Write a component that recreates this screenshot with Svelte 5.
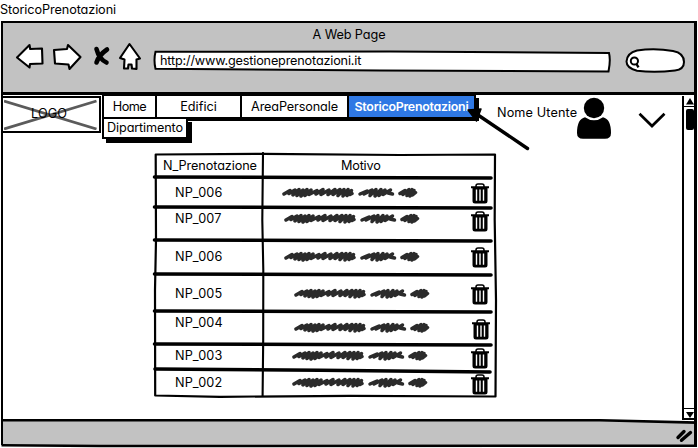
<script>
  const tabs = [
    { label: 'Home', width: 53, spacing: -0.5 },
    { label: 'Edifici', width: 85, spacing: 0 },
    { label: 'AreaPersonale', width: 107, spacing: -0.15 },
    { label: 'StoricoPrenotazioni', width: 127, spacing: -0.25, active: true }
  ];

  // height: row size; code, note and bin: top offsets inside the row
  const rows = [
    { id: 'NP_006', height: 30, code: 7, note: 9, noteX: 19, bin: 5, binX: 208 },
    { id: 'NP_007', height: 33, code: 3, note: 5, noteX: 21, bin: 3, binX: 208 },
    { id: 'NP_006', height: 34, code: 8, note: 10, noteX: 21, bin: 6, binX: 208 },
    { id: 'NP_005', height: 37, code: 11, note: 13, noteX: 31, bin: 9, binX: 208 },
    { id: 'NP_004', height: 33, code: 3, note: 10, noteX: 31, bin: 7, binX: 209 },
    { id: 'NP_003', height: 26, code: 3, note: 5, noteX: 29, bin: 3, binX: 208 },
    { id: 'NP_002', height: 26, code: 4, note: 6, noteX: 29, bin: 3, binX: 208 }
  ];
</script>

<div class="page">
  <h1>StoricoPrenotazioni</h1>

  <div class="browser">
    <header>
      <div class="title">A Web Page</div>
      <div class="toolbar">
        <svg class="nav" width="134" height="32" viewBox="14 42 134 32">
          <g fill="#fff" stroke="#000" stroke-width="2.1" stroke-linejoin="round">
            <path d="M17 58.5 L29.5 46 L30.2 50 L42 49.5 L42.5 64.5 L30 65 L29.5 68.5 Z" />
            <path d="M54 51 L67 50 L68 46 L80.5 58 L69.5 70 L68.5 65.5 L55 64.5 Z" />
            <path d="M129.5 45 L120 59 L124.5 60.5 L124 69.5 L128 69.5 L128.5 65.5 L131.5 65.5 L132 69.5 L136.5 70 L136.5 60.5 L140 59.5 Z" />
          </g>
          <g fill="none" stroke="#000" stroke-width="4.6" stroke-linecap="round">
            <path d="M96.5 50 Q99 60 106.5 63.5" />
            <path d="M107 50.5 Q99 56 96.5 63.5" />
          </g>
        </svg>
        <div class="address">
          <svg class="outline" width="460" height="24" viewBox="152 50 460 24">
            <path d="M155.5 52.8 L390 52.5 L609 54 Q610.8 61 608.5 72.5 L380 71.5 L155.5 69.8 Q153.5 61 155.5 52.8 Z" fill="#fff" stroke="#000" stroke-width="2" />
          </svg>
          <span>http://www.gestioneprenotazioni.it</span>
        </div>
        <svg class="search" width="62" height="28" viewBox="624 48 62 28">
          <path d="M637 51.5 Q655 49 673 52 Q684 54 684 63 Q684 70.5 675 71.5 Q655 74 637 71.8 Q626.5 69 626.5 62.5 Q627 54 637 51.5 Z" fill="#fff" stroke="#000" stroke-width="2" />
          <circle cx="634.4" cy="62" r="3.6" fill="none" stroke="#000" stroke-width="2" />
          <path d="M636.5 65 L638.5 68.3" stroke="#000" stroke-width="2.4" />
        </svg>
      </div>
    </header>

    <main>
      <div class="top">
        <div class="logo">
          <svg width="94" height="31" viewBox="4 98 94 31">
            <path d="M4 100 L96.5 128 M4 128 L96.5 100" stroke="#5b5b5b" stroke-width="2.8" />
          </svg>
          <span>LOGO</span>
        </div>

        <nav>
          <div class="tabrow">
            {#each tabs as tab}
              <div class="tab" class:active={tab.active} style="width:{tab.width}px;letter-spacing:{tab.spacing}px">{tab.label}</div>
            {/each}
          </div>
          <div class="tab second">Dipartimento</div>
          <svg class="pointer" width="70" height="50" viewBox="464 102 70 50">
            <path d="M478 115 L527.5 148.5" stroke="#000" stroke-width="3.4" stroke-linecap="round" />
            <path d="M468 110 L481 109 L476.5 121 Z" stroke="#000" stroke-width="1.5" stroke-linejoin="round" />
          </svg>
        </nav>

        <div class="user">
          <span>Nome Utente</span>
          <svg class="avatar" width="36" height="42" viewBox="576 97 36 42">
            <circle cx="594" cy="108" r="10.2" />
            <path d="M585 117.2 Q594 123.5 603 117.2 Q611 119 611 133 Q611 138.8 605 138.8 H583 Q577 138.8 577 133 Q577 119 585 117.2 Z" />
          </svg>
          <svg class="chevron" width="28" height="18" viewBox="638 111 28 18">
            <path d="M639.5 113.8 L652 126 L664.5 113.8" fill="none" stroke="#000" stroke-width="2.7" />
          </svg>
        </div>
      </div>

      <section class="table">
        <div class="row head">
          <div class="id">N_Prenotazione</div>
          <div class="reason">Motivo</div>
        </div>
        {#each rows as row}
          <div class="row" style="height:{row.height}px">
            <div class="id" style="padding-top:{row.code}px">{row.id}</div>
            <div class="cell">
              <svg class="note" style="margin:{row.note}px 0 0 {row.noteX}px" width="137" height="11" viewBox="0 0 137 11">
                <g fill="none" stroke="#2b2b2b" stroke-width="3.5" stroke-linejoin="round" stroke-linecap="round">
                  <path d="M2 7 L8 3.5 L7 6.5 L13 3 L11 8 L17 2.5 L15 8.5 L21 3 L19 9 L25 2.5 L23 8.5 L29 3 L27 7.5 L35 3.5 L34 7 L41 2.5 L39 7.5 L47 3 L46 7.5 L53 2.5 L51 7.5 L58 2.5 L56 8.5 L62 2.5 L61 9 L66 2.5 L65 8.5 L69.5 3.5 L68 7.5 L70 6.5" />
                  <path d="M78 7 L85 4 L82 7 L90 3 L88 8.5 L94 2.5 L93 9 L99 2.5 L97 8.5 L103 3 L101 7.5 L108.5 3 L106 6 L110.5 7" />
                  <path d="M118 6.5 L123 3.5 L121 7.5 L127 2.5 L125 8.5 L130 2.5 L128 9 L132 3.5 L130.5 8 L133.5 5.5" />
                </g>
              </svg>
              <svg class="bin" style="left:{row.binX}px;top:{row.bin}px" width="18" height="21" viewBox="0 0 18 21">
                <path d="M5 4 V3 Q5 1 7 1 H11 Q13 1 13 3 V4" fill="none" stroke="#000" stroke-width="1.5" />
                <path d="M0 3.2 H18 V5.2 H16.5 V18 Q16.5 20.5 14 20.5 H4 Q1.5 20.5 1.5 18 V5.2 H0 Z" />
                <path d="M5.5 6.5 V17.7 M9 6.5 V17.7 M12.5 6.5 V17.7" stroke="#fff" stroke-width="1.4" />
              </svg>
            </div>
          </div>
        {/each}
        <svg class="rules" width="346" height="248" viewBox="152 152 346 248">
          <g fill="none" stroke="#000" stroke-linecap="round">
            <path d="M155.7 154.5 L263 153.8 L400 155 L495 154.5 L494.7 220 L496 300 L495.5 396.5 L350 395.8 L220 396.8 L155.2 395.5 L155 290 L156 240 Z" stroke-width="2.2" stroke-linejoin="round" />
            <path d="M263 153 L262.3 220 L263.3 270 L263.2 340 L262.6 396" stroke-width="2.1" />
            <path d="M154.5 177 L320 177.5 L491 178 M154.5 207 L320 207.5 L491 208 M154.5 240 L320 240.5 L491 241 M154.5 274 L320 274.5 L491 275 M154.5 311 L320 311.5 L491 312 M154.5 344 L320 344.5 L491 345 M155 369 L320 370.3 L490 372" stroke-width="3.6" />
          </g>
        </svg>
      </section>

      <div class="scroll">
        <div class="arrow"><svg width="8" height="7" viewBox="0 0 8 7"><path d="M4 0 L8 6.5 H0 Z" /></svg></div>
        <div class="thumb"></div>
        <div class="arrow down"><svg width="8" height="6" viewBox="0 0 8 6"><path d="M0 0 H8 L4 6 Z" /></svg></div>
      </div>
    </main>

    <footer>
      <svg width="698" height="30" viewBox="0 418 698 30">
        <path d="M3 420.3 L600 419.8 L697 422.6 V446 H3 Z" fill="#c2c2c2" />
        <path d="M3 420.3 L600 420.2 L697 422.6" fill="none" stroke="#000" stroke-width="2.6" />
        <path d="M1.5 445.3 L100 446 L697 445.7" fill="none" stroke="#000" stroke-width="2.5" />
        <path d="M678 437.5 L684 431.5 M681.5 440.3 L690.5 432.5" stroke="#000" stroke-width="3.4" stroke-linecap="round" />
      </svg>
    </footer>
  </div>
</div>

<style>
  :global(body) {
    background: #fff;
  }

  .page {
    width: 698px;
    height: 448px;
    overflow: hidden;
    display: flex;
    flex-direction: column;
    font: 400 12.7px/16px Inter, 'Open Sans', sans-serif;
    font-feature-settings: 'cv11' 1;
    color: #000;
    background: #fff;
    white-space: nowrap;
  }

  .page svg {
    display: block;
    flex: none;
  }

  h1 {
    margin: 0;
    height: 20px;
    padding-top: 1px;
    box-sizing: content-box;
    font-size: 12.7px;
    font-weight: 400;
    line-height: 17px;
    letter-spacing: -0.1px;
  }

  .browser {
    flex: 1;
    display: flex;
    flex-direction: column;
    position: relative;
  }

  .browser::after {
    content: '';
    position: absolute;
    left: 1px;
    top: 1px;
    width: 691px;
    height: 422px;
    border: 2px solid #000;
    border-width: 2px 3px 0 2px;
    pointer-events: none;
  }

  header {
    height: 71px;
    margin: 1px 1px 0;
    background: #c2c2c2;
    border-bottom: 3px solid #000;
  }

  .title {
    padding-top: 6px;
    text-align: center;
    height: 14px;
    letter-spacing: -0.1px;
  }

  .toolbar {
    display: flex;
    align-items: flex-start;
    padding-left: 13px;
  }

  .address {
    position: relative;
    width: 460px;
    height: 24px;
    margin: 8px 12px 0 4px;
  }

  .address span {
    position: relative;
    display: block;
    padding: 4px 0 0 8px;
    letter-spacing: -0.18px;
  }

  .outline {
    position: absolute;
    left: 0;
    top: 0;
  }

  .search {
    margin-top: 6px;
  }

  main {
    height: 322px;
    position: relative;
    padding-left: 1px;
  }

  .top {
    display: flex;
    height: 58px;
  }

  .logo {
    position: relative;
    box-sizing: border-box;
    width: 100px;
    height: 37px;
    margin-top: 1px;
    padding: 1px;
    border: 2px solid #000;
  }

  .logo span {
    position: absolute;
    left: 28px;
    top: 8px;
    letter-spacing: 0.1px;
  }

  nav {
    position: relative;
    width: 378px;
    margin-left: 1px;
  }

  .tabrow {
    display: flex;
    width: 372px;
    height: 22px;
    border-top: 1px solid #000;
    border-left: 2px solid #000;
    box-shadow: 3px 3px 0 #000;
  }

  .tab {
    box-sizing: border-box;
    height: 22px;
    flex: none;
    background: #fff;
    text-align: center;
    line-height: 22px;
    border-right: 2px solid #000;
    border-bottom: 1px solid #000;
  }

  .active {
    background: #2f78e4;
    color: #fff;
    font-size: 12.4px;
    font-weight: 600;
  }

  .second {
    position: relative;
    width: 86px;
    height: 21px;
    line-height: 18px;
    border: 2px solid #000;
    border-top-width: 1px;
    letter-spacing: -0.15px;
    box-shadow: 4px 4px 0 #000;
  }

  .pointer {
    position: absolute;
    left: 362px;
    top: 7px;
  }

  .user {
    display: flex;
    padding: 10px 0 0 17px;
    letter-spacing: 0.1px;
  }

  .user span {
    width: 79px;
  }

  .avatar {
    margin-top: -8px;
  }

  .chevron {
    margin: 6px 0 0 26px;
  }

  .table {
    position: relative;
    width: 340px;
    margin-left: 154px;
  }

  .row {
    display: flex;
    height: 25px;
  }

  .id {
    box-sizing: border-box;
    width: 108px;
    padding-left: 20px;
    letter-spacing: 0.1px;
  }

  .head .id {
    padding: 5px 0 0 8px;
    letter-spacing: -0.1px;
  }

  .reason {
    padding: 5px 0 0 78px;
    letter-spacing: -0.2px;
  }

  .cell {
    position: relative;
    width: 232px;
  }

  .bin {
    position: absolute;
  }

  .rules {
    position: absolute;
    left: -3px;
    top: -1px;
  }

  .scroll {
    position: absolute;
    right: 2px;
    top: 1px;
    box-sizing: border-box;
    width: 14px;
    height: 324px;
    display: flex;
    flex-direction: column;
    align-items: center;
    border-left: 2px solid #000;
  }

  .arrow {
    box-sizing: border-box;
    width: 100%;
    height: 11px;
    padding: 2px 0 0 2px;
    border-bottom: 1px solid #000;
  }

  .thumb {
    width: 8px;
    height: 21px;
    margin-top: 2px;
    border-radius: 2px;
    background: #000;
  }

  .down {
    margin-top: auto;
    height: 12px;
    padding-top: 3px;
    border-top: 1px solid #000;
    border-bottom: 2px solid #000;
  }

  footer {
    height: 30px;
    margin-top: 1px;
  }
</style>
